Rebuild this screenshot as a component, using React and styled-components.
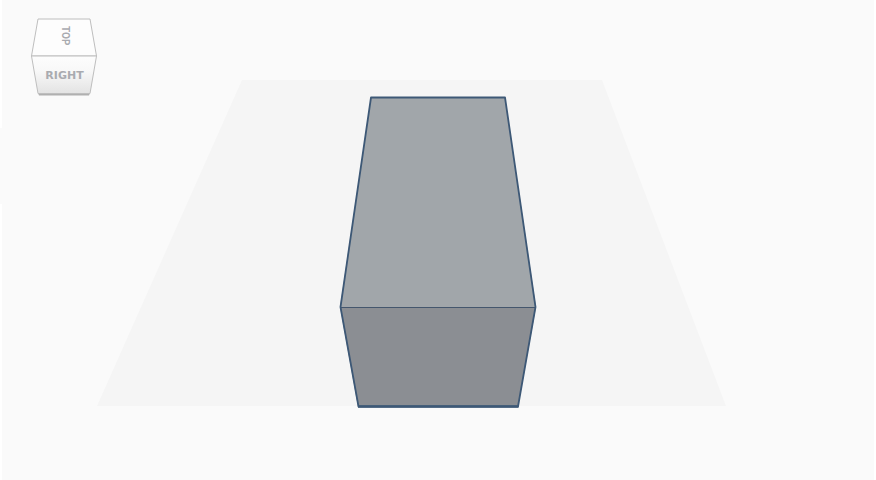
import React from "react";
import styled, { createGlobalStyle } from "styled-components";

const GlobalStyle = createGlobalStyle`
  * { box-sizing: border-box; }
  body { margin: 0; background: #ffffff; }
`;

const Viewport = styled.main`
  position: relative;
  height: 100vh;
  padding: 0 2px;
  overflow: hidden;
  background: #ffffff;
  font-family: "DejaVu Sans", sans-serif;
`;

const Canvas = styled.div`
  height: 100%;
  background: #fafafa;
`;

const Scene = styled.svg`
  display: block;
  width: 100%;
  height: 100%;
`;

const PanelHandle = styled.div`
  position: absolute;
  left: 0;
  top: 128px;
  width: 2px;
  height: 76px;
  background: #fafafa;
`;

const ViewCube = styled.nav`
  position: absolute;
  left: 31px;
  top: 18px;
  width: 67px;
`;

const CubeDrawing = styled.svg`
  display: block;
  width: 100%;
`;

const CubeFaces = styled.div`
  position: absolute;
  inset: 0;
  display: grid;
  grid-template-rows: 36px 44px;
`;

const FaceButton = styled.button`
  display: flex;
  align-items: center;
  justify-content: center;
  padding: 0;
  border: 0;
  background: transparent;
  color: #a9abb0;
  font-family: ${(p) => (p.$vertical ? "Roboto, sans-serif" : "inherit")};
  font-size: ${(p) => (p.$vertical ? "10px" : "11px")};
  font-weight: 700;
  line-height: 16px;
  writing-mode: ${(p) => (p.$vertical ? "vertical-rl" : "horizontal-tb")};
  cursor: pointer;
`;

export default function App() {
  return (
    <>
      <GlobalStyle />
      <Viewport>
        <Canvas>
          <Scene viewBox="2 0 872 480" role="img" aria-label="Box on workplane">
            <path d="M242 80H602L726 406H97Z" fill="#f5f5f5" />
            <path d="M371 97H505L536 307H340Z" fill="#a1a6aa" />
            <path d="M340 307H536L518 407H358Z" fill="#8b8e93" />
            <path d="M340 307.500H536" stroke="#44566d" />
            <path
              d="M371 97.500H505L535.500 307L518 406.500H358.500L340.500 307Z"
              fill="none"
              stroke="#3d5876"
              strokeWidth="1.800"
              strokeLinejoin="round"
            />
            <path d="M358 406.500H518.500" stroke="#3d5876" strokeWidth="2.400" />
          </Scene>
        </Canvas>
        <PanelHandle />
        <ViewCube aria-label="View cube">
          <CubeDrawing viewBox="0 0 67 79" aria-hidden="true">
            <defs>
              <linearGradient id="front" x1="0" y1="0" x2="0" y2="1">
                <stop offset="0" stopColor="#fdfdfd" />
                <stop offset="0.400" stopColor="#f8f8f8" />
                <stop offset="1" stopColor="#e3e3e3" />
              </linearGradient>
            </defs>
            <path d="M7 75H59L58 77.500H8Z" fill="#b0b0b0" />
            <path d="M7 1H59L65.500 38H0.500Z" fill="#fdfdfd" stroke="#bebebe" />
            <path d="M0.500 38H65.500L59 75.500H7Z" fill="url(#front)" stroke="#bebebe" />
          </CubeDrawing>
          <CubeFaces>
            <FaceButton type="button" $vertical>TOP</FaceButton>
            <FaceButton type="button">RIGHT</FaceButton>
          </CubeFaces>
        </ViewCube>
      </Viewport>
    </>
  );
}
